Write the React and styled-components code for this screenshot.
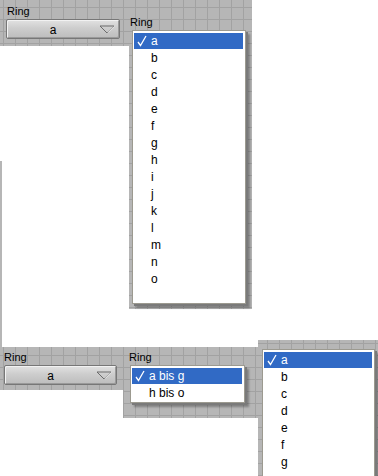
import React from "react";
import styled, { createGlobalStyle } from "styled-components";

const GlobalStyle = createGlobalStyle`
  html, body { margin: 0; padding: 0; background: #ffffff; }
  body { font-family: "Liberation Sans", Arial, sans-serif; }
`;

const Canvas = styled.div`
  position: relative;
  width: 378px;
  height: 476px;
  overflow: hidden;
  background: #ffffff;
`;

/* grey LabVIEW-style panel with a 12px grid */
const Grid = styled.div`
  position: absolute;
  left: ${(p) => p.$x}px;
  top: ${(p) => p.$y}px;
  width: ${(p) => p.$w}px;
  height: ${(p) => p.$h}px;
  background-color: #b6b6b6;
  background-image:
    linear-gradient(to right, #a2a2a2 1px, transparent 1px),
    linear-gradient(to bottom, #a2a2a2 1px, transparent 1px);
  background-size: 12px 12px;
  background-position: ${(p) => -p.$x + 3}px ${(p) => -p.$y + 7}px;
`;

const Shot = styled.div`
  position: absolute;
  left: ${(p) => p.$x}px;
  top: ${(p) => p.$y}px;
  display: flex;
  flex-direction: column;
  align-items: flex-start;
`;

const Label = styled.span`
  font-size: 11px;
  line-height: 12px;
  color: #000;
  margin-left: ${(p) => p.$indent || 0}px;
`;

const Combo = styled.div`
  box-sizing: border-box;
  width: ${(p) => p.$w}px;
  height: 20px;
  margin-top: 2px;
  display: flex;
  align-items: center;
  border: 1px solid #777;
  border-radius: 2px;
  background: linear-gradient(#e2e2e2, #cdcdcd 45%, #bdbdbd);
  box-shadow: inset 1px 1px 0 #f2f2f2, inset -1px -1px 0 #9a9a9a;
`;

const ComboText = styled.span`
  flex: 1;
  text-align: center;
  font-size: 12px;
  color: #000;
  padding-top: 1px;
`;

const Arrow = styled.svg`
  width: 16px;
  height: 9px;
  margin-right: 4px;
`;

const Menu = styled.div`
  box-sizing: border-box;
  width: ${(p) => p.$w}px;
  height: ${(p) => p.$h}px;
  margin-top: ${(p) => p.$gap || 0}px;
  margin-left: ${(p) => p.$indent || 0}px;
  padding: 2px 2px 0 1px;
  background: #fff;
  border: 1px solid #9c9a90;
  box-shadow: 2px 2px 0 #7a7a7a, 4px 4px 2px rgba(0, 0, 0, 0.3);
  display: flex;
  flex-direction: column;
  overflow: hidden;
`;

const Item = styled.div`
  height: 16px;
  margin-bottom: 1px;
  display: flex;
  align-items: center;
  padding-left: 2px;
  font-size: 12px;
  color: ${(p) => (p.$active ? "#fff" : "#000")};
  background: ${(p) => (p.$active ? "#316ac5" : "transparent")};
  flex-shrink: 0;
`;

const Check = styled.svg`
  width: 12px;
  height: 12px;
  margin-right: 3px;
  visibility: ${(p) => (p.$on ? "visible" : "hidden")};
`;

const Strip = styled.div`
  position: absolute;
  left: 0;
  top: 161px;
  width: 2px;
  height: 186px;
  background: #b6b6b6;
`;

const DownArrow = () => (
  <Arrow viewBox="0 0 16 9">
    <polygon points="1,1 15,1 8,8" fill="none" stroke="#6a6a6a" strokeWidth="1" />
    <line x1="9" y1="7.5" x2="15" y2="1.5" stroke="#f0f0f0" strokeWidth="1" />
  </Arrow>
);

const MenuItem = ({ label, active }) => (
  <Item $active={active}>
    <Check $on={active} viewBox="0 0 12 12">
      <polyline points="2,7 4.5,10.5 10,1" fill="none" stroke="#fff" strokeWidth="1.3" />
    </Check>
    {label}
  </Item>
);

const letters = "abcdefghijklmno".split("");

export default function App() {
  return (
    <Canvas>
      <GlobalStyle />

      {/* top screenshot */}
      <Grid $x={0} $y={0} $w={252} $h={46} />
      <Grid $x={129} $y={0} $w={123} $h={309} />
      <Shot $x={6} $y={5}>
        <Label $indent={1}>Ring</Label>
        <Combo $w={114}>
          <ComboText>a</ComboText>
          <DownArrow />
        </Combo>
      </Shot>
      <Shot $x={130} $y={16}>
        <Label>Ring</Label>
        <Menu $w={114} $h={274} $gap={2} $indent={2}>
          {letters.map((l, i) => (
            <MenuItem key={l} label={l} active={i === 0} />
          ))}
        </Menu>
      </Shot>

      <Strip />

      {/* bottom screenshot */}
      <Grid $x={0} $y={347} $w={123} $h={43} />
      <Grid $x={123} $y={347} $w={139} $h={71} />
      <Shot $x={4} $y={351}>
        <Label>Ring</Label>
        <Combo $w={113}>
          <ComboText>a</ComboText>
          <DownArrow />
        </Combo>
      </Shot>
      <Shot $x={129} $y={351}>
        <Label>Ring</Label>
        <Menu $w={115} $h={38} $gap={2} $indent={1}>
          <MenuItem label="a bis g" active />
          <MenuItem label="h bis o" />
        </Menu>
      </Shot>

      {/* third screenshot */}
      <Grid $x={258} $y={340} $w={120} $h={136} />
      <Shot $x={262} $y={349}>
        <Menu $w={113} $h={140}>
          {letters.slice(0, 7).map((l, i) => (
            <MenuItem key={l} label={l} active={i === 0} />
          ))}
        </Menu>
      </Shot>
    </Canvas>
  );
}
